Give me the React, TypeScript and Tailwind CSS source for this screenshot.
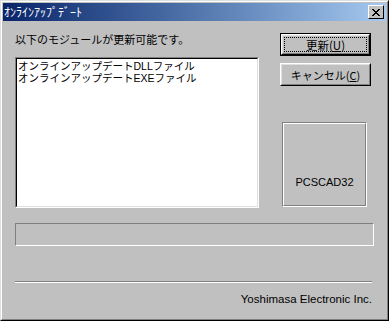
import React from "react"

const jp = { fontFamily: '"Noto Sans CJK JP", "Noto Sans", sans-serif' }
const mixed = { fontFamily: '"Liberation Sans", "Noto Sans CJK JP", sans-serif' }

const items = ["オンラインアップデートDLLファイル", "オンラインアップデートEXEファイル"]

function CloseIcon() {
  return (
    <svg width="8" height="7" viewBox="0 0 8 7" shapeRendering="crispEdges">
      <path
        d="M0 0h2v1h-2zM6 0h2v1h-2zM1 1h2v1h-2zM5 1h2v1h-2zM2 2h4v1h-4zM3 3h2v1h-2zM2 4h4v1h-4zM1 5h2v1h-2zM5 5h2v1h-2zM0 6h2v1h-2zM6 6h2v1h-2z"
        fill="#000"
      />
    </svg>
  )
}

export default function App() {
  return (
    <div
      className="w-[389px] h-[321px] bg-[#c0c0c0] border border-t-[#dfdfdf] border-l-[#dfdfdf] border-r-black border-b-black"
      style={jp}
    >
      <div className="h-full flex flex-col border border-t-white border-l-white border-r-[#808080] border-b-[#808080] p-px">
        {/* title bar */}
        <div className="h-[18px] flex items-center justify-between pl-[1px] pr-[2px] bg-gradient-to-r from-[#0a246a] to-[#a6caf0]">
          <span className="text-white text-[12px] leading-[14px]">ｵﾝﾗｲﾝｱｯﾌﾟﾃﾞｰﾄ</span>
          <button className="w-[16px] h-[14px] flex items-center justify-center bg-[#c0c0c0] border border-t-white border-l-white border-r-black border-b-black">
            <CloseIcon />
          </button>
        </div>

        <div className="flex-1 flex flex-col px-[12px]">
          <div className="flex">
            <div className="w-[244px] flex flex-col">
              <div className="mt-[11px] h-[14px] mb-[11px] text-[11px] leading-[14px] text-black">
                以下のモジュールが更新可能です。
              </div>
              <div className="h-[151px] bg-white border border-t-[#808080] border-l-[#808080] border-r-white border-b-white">
                <div className="h-full border border-t-black border-l-black border-r-[#dfdfdf] border-b-[#dfdfdf] px-[1px] pt-[1px]" style={mixed}>
                  {items.map((item) => (
                    <div key={item} className="text-[10.5px] leading-[12px] text-black whitespace-nowrap">
                      {item}
                    </div>
                  ))}
                </div>
              </div>
            </div>

            <div className="ml-[21px] w-[91px] flex flex-col pt-[12px]">
              <button className="h-[23px] border border-black">
                <div className="h-full border border-t-white border-l-white border-r-black border-b-black">
                  <div className="h-full border border-t-[#dfdfdf] border-l-[#dfdfdf] border-r-[#808080] border-b-[#808080] p-[1px]">
                    <div className="h-full border border-dotted border-black flex items-center justify-center text-[11.5px] leading-[12px]">
                      更新(<span className="underline">U</span>)
                    </div>
                  </div>
                </div>
              </button>
              <button className="mt-[7px] h-[23px] border border-t-white border-l-white border-r-black border-b-black">
                <div className="h-full border border-t-[#dfdfdf] border-l-[#dfdfdf] border-r-[#808080] border-b-[#808080] flex items-center justify-center text-[11px] leading-[12px]">
                  キャンセル(<span className="underline">C</span>)
                </div>
              </button>
              <div className="mt-[36px] ml-[2px] w-[85px] h-[85px] border border-t-[#808080] border-l-[#808080] border-r-white border-b-white">
                <div className="h-full border border-t-white border-l-white border-r-[#808080] border-b-[#808080] flex flex-col justify-end items-center pb-[17px]">
                  <span className="text-[11px] leading-[12px] text-black" style={{ fontFamily: '"Liberation Sans", Arial, sans-serif' }}>
                    PCSCAD32
                  </span>
                </div>
              </div>
            </div>
          </div>

          {/* progress */}
          <div className="mt-[15px] h-[23px] border border-t-[#808080] border-l-[#808080] border-r-white border-b-white" />

          {/* separator */}
          <div className="mt-[35px] mr-[2px] h-[2px] border-t border-t-[#808080] border-b border-b-white" />

          <div
            className="mt-[9px] mr-[2px] text-right text-[11.5px] leading-[14px] text-black"
            style={{ fontFamily: '"Liberation Sans", Arial, sans-serif' }}
          >
            Yoshimasa Electronic Inc.
          </div>
        </div>
      </div>
    </div>
  )
}
